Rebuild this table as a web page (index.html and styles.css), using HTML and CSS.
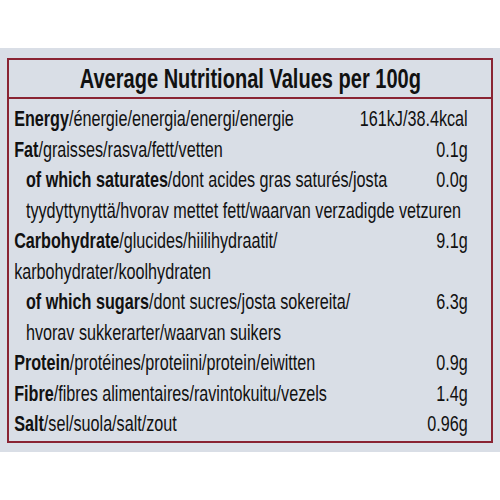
FILE: index.html
```html
<!DOCTYPE html>
<html lang="en">

<head>
    <meta charset="UTF-8">
    <meta name="viewport" content="width=device-width, initial-scale=1.0">
    <title>Average Nutritional Values</title>
    <link rel="stylesheet" href="styles.css">
</head>

<body>

    <div class="label">
        <div class="panel">
            <h1 class="panel-title"><span class="title-text">Average Nutritional Values per 100g</span></h1>

            <div class="rows">
                <div class="line">
                    <span class="name"><b>Energy</b>/énergie/energia/energi/energie</span>
                    <span class="value">161kJ/38.4kcal</span>
                </div>
                <div class="line">
                    <span class="name"><b>Fat</b>/graisses/rasva/fett/vetten</span>
                    <span class="value">0.1g</span>
                </div>
                <div class="line sub">
                    <span class="name"><b>of which saturates</b>/dont acides gras saturés/josta</span>
                    <span class="value">0.0g</span>
                </div>
                <div class="line sub">
                    <span class="name">tyydyttynyttä/hvorav mettet fett/waarvan verzadigde vetzuren</span>
                </div>
                <div class="line">
                    <span class="name"><b>Carbohydrate</b>/glucides/hiilihydraatit/</span>
                    <span class="value">9.1g</span>
                </div>
                <div class="line">
                    <span class="name">karbohydrater/koolhydraten</span>
                </div>
                <div class="line sub">
                    <span class="name"><b>of which sugars</b>/dont sucres/josta sokereita/</span>
                    <span class="value">6.3g</span>
                </div>
                <div class="line sub">
                    <span class="name">hvorav sukkerarter/waarvan suikers</span>
                </div>
                <div class="line">
                    <span class="name"><b>Protein</b>/protéines/proteiini/protein/eiwitten</span>
                    <span class="value">0.9g</span>
                </div>
                <div class="line">
                    <span class="name"><b>Fibre</b>/fibres alimentaires/ravintokuitu/vezels</span>
                    <span class="value">1.4g</span>
                </div>
                <div class="line">
                    <span class="name"><b>Salt</b>/sel/suola/salt/zout</span>
                    <span class="value">0.96g</span>
                </div>
            </div>
        </div>
    </div>

</body>

</html>
```

FILE: styles.css
```css
* {
    margin: 0;
    padding: 0;
    box-sizing: border-box;
}

body {
    font-family: "Liberation Sans", Arial, sans-serif;
    background-color: #ffffff;
    color: #111111;
    overflow: hidden;
}

.label {
    margin-top: 48px;
    padding: 10px 7px 9px 7px;
    background-color: #d9dee6;
}

.panel {
    border: 2px solid #8a2433;
    overflow: hidden;
}

.panel-title {
    height: 39px;
    line-height: 37px;
    border-bottom: 2px solid #8a2433;
    text-align: center;
    font-size: 28px;
    font-weight: bold;
    white-space: nowrap;
}

/* the print uses a very condensed face, so the text is squeezed */
.title-text {
    display: inline-block;
    transform: scaleX(0.716);
}

.rows {
    width: 656px;
    padding: 5px 32px 1px 7px;
    transform: scaleX(0.735);
    transform-origin: left top;
}

.line {
    display: flex;
    justify-content: space-between;
    font-size: 22px;
    line-height: 30.5px;
    white-space: nowrap;
}

.line.sub {
    padding-left: 16px;
}

.line b {
    font-weight: bold;
}
```
